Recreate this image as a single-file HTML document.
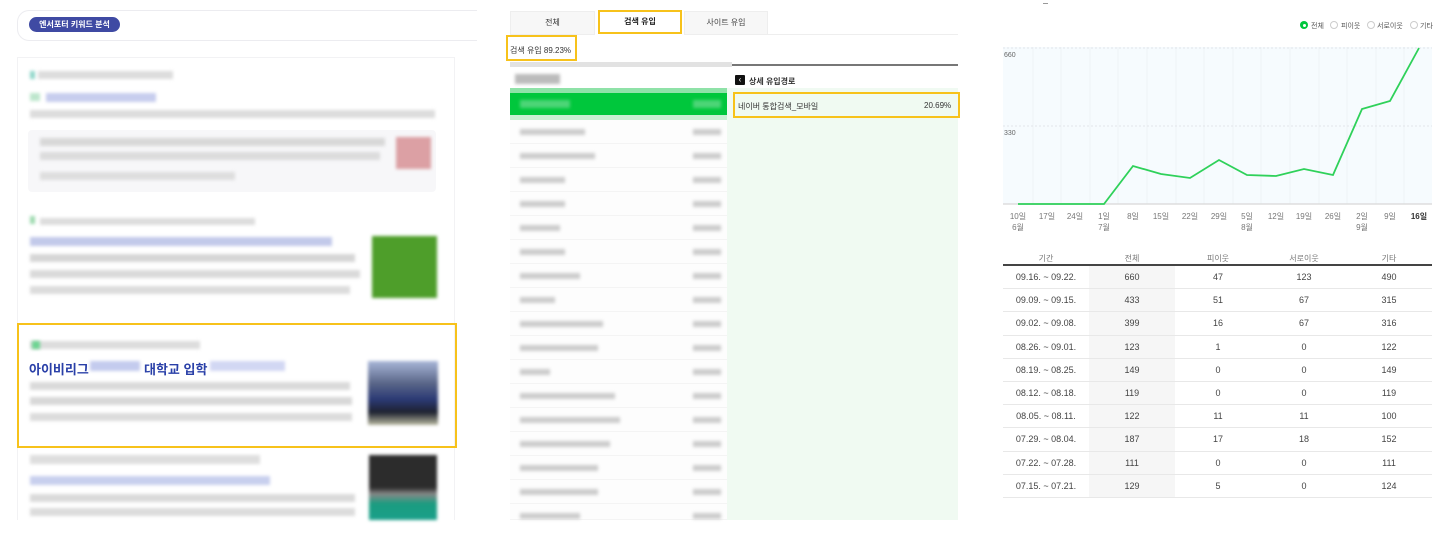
<!DOCTYPE html>
<html><head><meta charset="utf-8"><style>
*{margin:0;padding:0;box-sizing:border-box}
body{width:1455px;height:546px;background:#fff;position:relative;overflow:hidden;font-family:"Liberation Sans","Noto Sans CJK KR",sans-serif}
.a{position:absolute}
.b{position:absolute;filter:blur(1.5px)}
.t{position:absolute;font-size:8px;color:#333;white-space:nowrap}
.y{position:absolute;border:2px solid #f7c21b}
.row{position:absolute;left:510px;width:217px;height:24px;border-bottom:1px solid #f4f4f4;background:#fdfdfd}
.row i{position:absolute;top:9px;height:6px;background:#ccc;filter:blur(1.5px)}
.tr{position:absolute;left:1003px;width:429px;height:23.2px;border-bottom:1px solid #e8e8e8;font-size:9px;color:#444}
.tr span{position:absolute;top:6px;width:86px;text-align:center}
.xl{position:absolute;font-size:8px;color:#777;width:24px;text-align:center}
</style></head><body>

<!-- LEFT PANEL -->
<div class="a" style="left:17px;top:10px;width:460px;height:31px;border:1px solid #ececf0;border-radius:12px 0 0 12px;border-right:none"></div>
<div class="a" style="left:29px;top:17px;width:91px;height:15px;border-radius:8px;background:#3f4aa3;color:#fff;font-size:8px;font-weight:bold;text-align:center;line-height:15px">엔서포터 키워드 분석</div>
<div class="a" style="left:17px;top:57px;width:438px;height:463px;border:1px solid #f2f2f4;border-bottom:none"></div>

<div class="b" style="left:30px;top:71px;width:5px;height:8px;background:#8fd6c9"></div>
<div class="b" style="left:38px;top:71px;width:135px;height:8px;background:#ddd"></div>
<div class="b" style="left:30px;top:93px;width:10px;height:8px;background:#bde6cc"></div>
<div class="b" style="left:46px;top:93px;width:110px;height:9px;background:#c7cdee"></div>
<div class="b" style="left:30px;top:110px;width:405px;height:8px;background:#ddd"></div>
<div class="a" style="left:28px;top:130px;width:408px;height:62px;background:#f7f7f9;border-radius:4px"></div>
<div class="b" style="left:40px;top:138px;width:345px;height:8px;background:#d8d8d8"></div>
<div class="b" style="left:40px;top:152px;width:340px;height:8px;background:#dcdcdc"></div>
<div class="b" style="left:40px;top:172px;width:195px;height:8px;background:#dedede"></div>
<div class="b" style="left:396px;top:137px;width:35px;height:32px;background:#dca0a4"></div>
<div class="b" style="left:30px;top:216px;width:5px;height:8px;background:#9ddaaf"></div>
<div class="b" style="left:40px;top:218px;width:215px;height:7px;background:#ddd"></div>
<div class="b" style="left:30px;top:237px;width:302px;height:9px;background:#c2c9ea"></div>
<div class="b" style="left:30px;top:254px;width:325px;height:8px;background:#d6d6d6"></div>
<div class="b" style="left:30px;top:270px;width:330px;height:8px;background:#dadada"></div>
<div class="b" style="left:30px;top:286px;width:320px;height:8px;background:#dcdcdc"></div>
<div class="b" style="left:372px;top:236px;width:65px;height:62px;background:#4e9e2a"></div>

<div class="y" style="left:17px;top:323px;width:440px;height:125px"></div>
<div class="b" style="left:30px;top:341px;width:170px;height:8px;background:#ddd"></div>
<div class="b" style="left:32px;top:341px;width:8px;height:8px;background:#6cd491"></div>
<div class="t" style="left:29px;top:359px;font-size:13px;font-weight:bold;color:#2a40a8">아이비리그</div>
<div class="b" style="left:90px;top:361px;width:50px;height:10px;background:#c4cbee"></div>
<div class="t" style="left:144px;top:359px;font-size:13px;font-weight:bold;color:#2a40a8">대학교 입학</div>
<div class="b" style="left:210px;top:361px;width:75px;height:10px;background:#d2d7f3"></div>
<div class="b" style="left:30px;top:382px;width:320px;height:8px;background:#dadada"></div>
<div class="b" style="left:30px;top:397px;width:322px;height:8px;background:#d8d8d8"></div>
<div class="b" style="left:30px;top:413px;width:322px;height:8px;background:#dcdcdc"></div>
<div class="b" style="left:368px;top:361px;width:70px;height:64px;background:linear-gradient(#a8b6d8,#5a6688 35%,#2b3a75 60%,#1e2230 80%,#b8b8a0)"></div>
<div class="b" style="left:30px;top:455px;width:230px;height:9px;background:#dedede"></div>
<div class="b" style="left:30px;top:476px;width:240px;height:9px;background:#c8cfee"></div>
<div class="b" style="left:30px;top:494px;width:325px;height:8px;background:#dadada"></div>
<div class="b" style="left:30px;top:508px;width:325px;height:8px;background:#dcdcdc"></div>
<div class="b" style="left:369px;top:455px;width:68px;height:65px;background:linear-gradient(#2c2c2c 50%,#888 60%,#1a9c80 75%,#1aa08a)"></div>

<!-- MIDDLE PANEL -->
<div class="a" style="left:510px;top:11px;width:85px;height:24px;background:#f7f7f7;border:1px solid #eee;font-size:8px;text-align:center;line-height:22px;color:#333">전체</div>
<div class="y" style="left:598px;top:10px;width:84px;height:24px;font-size:8px;text-align:center;line-height:20px;color:#222;font-weight:bold">검색 유입</div>
<div class="a" style="left:684px;top:11px;width:84px;height:24px;background:#f7f7f7;border:1px solid #eee;font-size:8px;text-align:center;line-height:22px;color:#444">사이트 유입</div>
<div class="a" style="left:768px;top:34px;width:190px;height:1px;background:#eee"></div>
<div class="y" style="left:506px;top:35px;width:71px;height:26px"></div>
<div class="t" style="left:510px;top:45px">검색 유입 89.23%</div>
<div class="a" style="left:510px;top:62px;width:222px;height:5px;background:#e2e2e2"></div>
<div class="a" style="left:732px;top:64px;width:226px;height:2px;background:#777"></div>
<div class="b" style="left:515px;top:74px;width:45px;height:10px;background:#bbb"></div>
<div class="a" style="left:510px;top:88px;width:217px;height:32px;background:#c8f0d2"></div>
<div class="a" style="left:510px;top:88px;width:217px;height:5px;background:#8fe2a8"></div>
<div class="a" style="left:510px;top:93px;width:217px;height:22px;background:#00c73c"></div>
<div class="a" style="left:727px;top:100px;border-left:5px solid #00c73c;border-top:5px solid transparent;border-bottom:5px solid transparent"></div>
<div class="b" style="left:520px;top:100px;width:50px;height:8px;background:#4cd577"></div>
<div class="b" style="left:693px;top:100px;width:28px;height:8px;background:#4cd577"></div>
<div class="a" style="left:727px;top:88px;width:231px;height:432px;background:#f0faf2"></div>
<div class="a" style="left:735px;top:75px;width:10px;height:10px;background:#111;border-radius:1px;color:#fff;font-size:8px;line-height:10px;text-align:center">‹</div>
<div class="t" style="left:749px;top:76px;font-weight:bold">상세 유입경로</div>
<div class="y" style="left:733px;top:92px;width:227px;height:26px"></div>
<div class="t" style="left:738px;top:101px">네이버 통합검색_모바일</div>
<div class="t" style="left:924px;top:101px">20.69%</div>

<div class="row" style="top:120px"><i style="left:10px;width:65px"></i><i style="left:183px;width:28px"></i></div>
<div class="row" style="top:144px"><i style="left:10px;width:75px"></i><i style="left:183px;width:28px"></i></div>
<div class="row" style="top:168px"><i style="left:10px;width:45px"></i><i style="left:183px;width:28px"></i></div>
<div class="row" style="top:192px"><i style="left:10px;width:45px"></i><i style="left:183px;width:28px"></i></div>
<div class="row" style="top:216px"><i style="left:10px;width:40px"></i><i style="left:183px;width:28px"></i></div>
<div class="row" style="top:240px"><i style="left:10px;width:45px"></i><i style="left:183px;width:28px"></i></div>
<div class="row" style="top:264px"><i style="left:10px;width:60px"></i><i style="left:183px;width:28px"></i></div>
<div class="row" style="top:288px"><i style="left:10px;width:35px"></i><i style="left:183px;width:28px"></i></div>
<div class="row" style="top:312px"><i style="left:10px;width:83px"></i><i style="left:183px;width:28px"></i></div>
<div class="row" style="top:336px"><i style="left:10px;width:78px"></i><i style="left:183px;width:28px"></i></div>
<div class="row" style="top:360px"><i style="left:10px;width:30px"></i><i style="left:183px;width:28px"></i></div>
<div class="row" style="top:384px"><i style="left:10px;width:95px"></i><i style="left:183px;width:28px"></i></div>
<div class="row" style="top:408px"><i style="left:10px;width:100px"></i><i style="left:183px;width:28px"></i></div>
<div class="row" style="top:432px"><i style="left:10px;width:90px"></i><i style="left:183px;width:28px"></i></div>
<div class="row" style="top:456px"><i style="left:10px;width:78px"></i><i style="left:183px;width:28px"></i></div>
<div class="row" style="top:480px"><i style="left:10px;width:78px"></i><i style="left:183px;width:28px"></i></div>
<div class="row" style="top:504px;height:16px"><i style="left:10px;width:60px"></i><i style="left:183px;width:28px"></i></div>

<!-- RIGHT PANEL -->
<div class="a" style="left:1043px;top:3px;width:5px;height:1px;background:#999"></div>
<div class="a" style="left:1300px;top:21px;width:8px;height:8px;border-radius:50%;background:#00c73c"><div style="margin:2.5px;width:3px;height:3px;background:#fff;border-radius:50%"></div></div>
<div class="t" style="left:1311px;top:21px;font-size:7px;color:#555">전체</div>
<div class="a" style="left:1330px;top:21px;width:8px;height:8px;border-radius:50%;border:1px solid #ccc"></div>
<div class="t" style="left:1341px;top:21px;font-size:7px;color:#555">피이웃</div>
<div class="a" style="left:1367px;top:21px;width:8px;height:8px;border-radius:50%;border:1px solid #ccc"></div>
<div class="t" style="left:1377px;top:21px;font-size:7px;color:#555">서로이웃</div>
<div class="a" style="left:1410px;top:21px;width:8px;height:8px;border-radius:50%;border:1px solid #ccc"></div>
<div class="t" style="left:1420px;top:21px;font-size:7px;color:#555">기타</div>

<svg class="a" style="left:0;top:0" width="1455" height="546">
<rect x="1003" y="47" width="429" height="157" fill="#f6fbfe"/>
<g stroke="#edf3f7" stroke-width="1">
<line x1="1033" y1="47" x2="1033" y2="204"/><line x1="1061" y1="47" x2="1061" y2="204"/><line x1="1090" y1="47" x2="1090" y2="204"/><line x1="1118" y1="47" x2="1118" y2="204"/><line x1="1147" y1="47" x2="1147" y2="204"/><line x1="1176" y1="47" x2="1176" y2="204"/><line x1="1204" y1="47" x2="1204" y2="204"/><line x1="1233" y1="47" x2="1233" y2="204"/><line x1="1261" y1="47" x2="1261" y2="204"/><line x1="1290" y1="47" x2="1290" y2="204"/><line x1="1319" y1="47" x2="1319" y2="204"/><line x1="1347" y1="47" x2="1347" y2="204"/><line x1="1376" y1="47" x2="1376" y2="204"/><line x1="1404" y1="47" x2="1404" y2="204"/>
</g>
<line x1="1003" y1="48" x2="1432" y2="48" stroke="#e3e6ea" stroke-dasharray="2 2"/>
<line x1="1003" y1="126" x2="1432" y2="126" stroke="#e3e6ea" stroke-dasharray="2 2"/>
<line x1="1003" y1="204" x2="1432" y2="204" stroke="#ddd" stroke-width="1.5"/>
<polyline fill="none" stroke="#2fd15a" stroke-width="1.8" points="1018,204 1104,204 1133,166 1161,174 1190,178 1219,160 1247,175 1276,176 1304,169 1333,175 1362,109 1390,101 1419,48"/>
</svg>
<div class="t" style="left:1004px;top:52px;font-size:7px;color:#666">660</div>
<div class="t" style="left:1004px;top:130px;font-size:7px;color:#666">330</div>
<div class="xl" style="left:1006px;top:211px">10일</div><div class="xl" style="left:1006px;top:222px">6월</div>
<div class="xl" style="left:1035px;top:211px">17일</div>
<div class="xl" style="left:1063px;top:211px">24일</div>
<div class="xl" style="left:1092px;top:211px">1일</div><div class="xl" style="left:1092px;top:222px">7월</div>
<div class="xl" style="left:1121px;top:211px">8일</div>
<div class="xl" style="left:1149px;top:211px">15일</div>
<div class="xl" style="left:1178px;top:211px">22일</div>
<div class="xl" style="left:1207px;top:211px">29일</div>
<div class="xl" style="left:1235px;top:211px">5일</div><div class="xl" style="left:1235px;top:222px">8월</div>
<div class="xl" style="left:1264px;top:211px">12일</div>
<div class="xl" style="left:1292px;top:211px">19일</div>
<div class="xl" style="left:1321px;top:211px">26일</div>
<div class="xl" style="left:1350px;top:211px">2일</div><div class="xl" style="left:1350px;top:222px">9월</div>
<div class="xl" style="left:1378px;top:211px">9일</div>
<div class="xl" style="left:1407px;top:211px;font-weight:bold;color:#333">16일</div>

<div class="a" style="left:1089px;top:266px;width:86px;height:232px;background:#f6f6f6"></div>
<div class="tr" style="top:247px;border:none;color:#777;font-size:8px"><span style="left:0">기간</span><span style="left:86px">전체</span><span style="left:172px">피이웃</span><span style="left:258px">서로이웃</span><span style="left:343px">기타</span></div>
<div class="a" style="left:1003px;top:264px;width:429px;height:2px;background:#444"></div>
<div class="tr" style="top:266px"><span style="left:0">09.16. ~ 09.22.</span><span style="left:86px">660</span><span style="left:172px">47</span><span style="left:258px">123</span><span style="left:343px">490</span></div>
<div class="tr" style="top:289.2px"><span style="left:0">09.09. ~ 09.15.</span><span style="left:86px">433</span><span style="left:172px">51</span><span style="left:258px">67</span><span style="left:343px">315</span></div>
<div class="tr" style="top:312.4px"><span style="left:0">09.02. ~ 09.08.</span><span style="left:86px">399</span><span style="left:172px">16</span><span style="left:258px">67</span><span style="left:343px">316</span></div>
<div class="tr" style="top:335.6px"><span style="left:0">08.26. ~ 09.01.</span><span style="left:86px">123</span><span style="left:172px">1</span><span style="left:258px">0</span><span style="left:343px">122</span></div>
<div class="tr" style="top:358.8px"><span style="left:0">08.19. ~ 08.25.</span><span style="left:86px">149</span><span style="left:172px">0</span><span style="left:258px">0</span><span style="left:343px">149</span></div>
<div class="tr" style="top:382px"><span style="left:0">08.12. ~ 08.18.</span><span style="left:86px">119</span><span style="left:172px">0</span><span style="left:258px">0</span><span style="left:343px">119</span></div>
<div class="tr" style="top:405.2px"><span style="left:0">08.05. ~ 08.11.</span><span style="left:86px">122</span><span style="left:172px">11</span><span style="left:258px">11</span><span style="left:343px">100</span></div>
<div class="tr" style="top:428.4px"><span style="left:0">07.29. ~ 08.04.</span><span style="left:86px">187</span><span style="left:172px">17</span><span style="left:258px">18</span><span style="left:343px">152</span></div>
<div class="tr" style="top:451.6px"><span style="left:0">07.22. ~ 07.28.</span><span style="left:86px">111</span><span style="left:172px">0</span><span style="left:258px">0</span><span style="left:343px">111</span></div>
<div class="tr" style="top:474.8px"><span style="left:0">07.15. ~ 07.21.</span><span style="left:86px">129</span><span style="left:172px">5</span><span style="left:258px">0</span><span style="left:343px">124</span></div>

</body></html>
